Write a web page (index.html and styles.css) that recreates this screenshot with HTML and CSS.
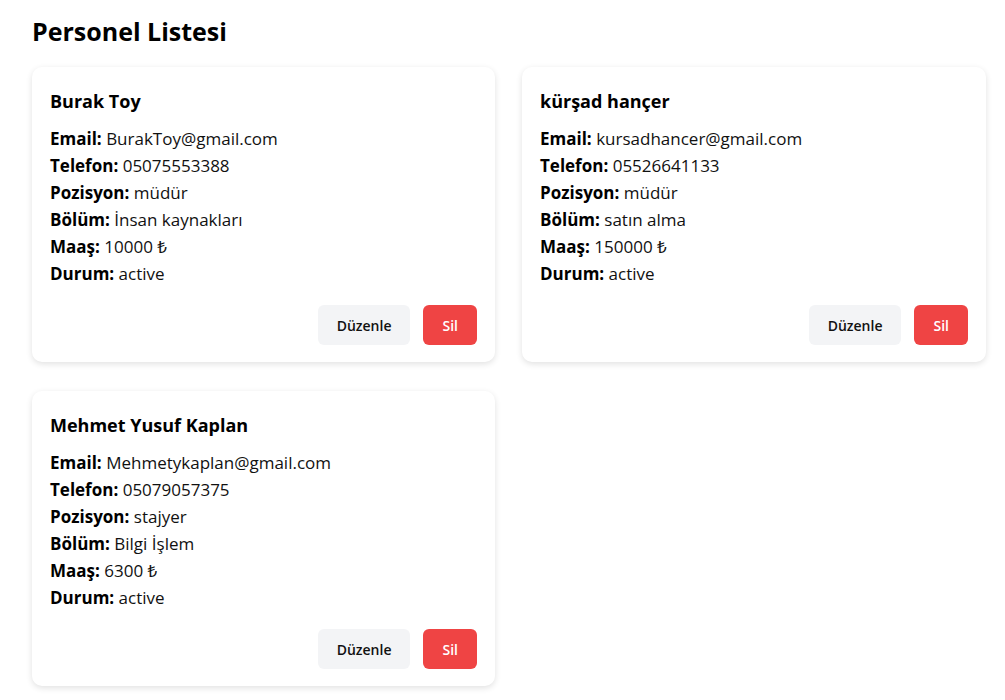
FILE: index.html
```html
<!DOCTYPE html>
<html lang="tr">
<head>
<meta charset="utf-8">
<title>Personel Listesi</title>
<link rel="stylesheet" href="styles.css">
</head>
<body>
<main class="page">
  <h1 class="title">Personel Listesi</h1>
  <div class="grid">
    <div class="card">
      <h2 class="name">Burak Toy</h2>
      <p class="row"><b>Email:</b> BurakToy@gmail.com</p>
      <p class="row"><b>Telefon:</b> 05075553388</p>
      <p class="row"><b>Pozisyon:</b> müdür</p>
      <p class="row"><b>Bölüm:</b> İnsan kaynakları</p>
      <p class="row"><b>Maaş:</b> 10000 ₺</p>
      <p class="row"><b>Durum:</b> active</p>
      <div class="actions">
        <button class="btn btn-edit">Düzenle</button>
        <button class="btn btn-del">Sil</button>
      </div>
    </div>
    <div class="card">
      <h2 class="name">kürşad hançer</h2>
      <p class="row"><b>Email:</b> kursadhancer@gmail.com</p>
      <p class="row"><b>Telefon:</b> 05526641133</p>
      <p class="row"><b>Pozisyon:</b> müdür</p>
      <p class="row"><b>Bölüm:</b> satın alma</p>
      <p class="row"><b>Maaş:</b> 150000 ₺</p>
      <p class="row"><b>Durum:</b> active</p>
      <div class="actions">
        <button class="btn btn-edit">Düzenle</button>
        <button class="btn btn-del">Sil</button>
      </div>
    </div>
    <div class="card">
      <h2 class="name">Mehmet Yusuf Kaplan</h2>
      <p class="row"><b>Email:</b> Mehmetykaplan@gmail.com</p>
      <p class="row"><b>Telefon:</b> 05079057375</p>
      <p class="row"><b>Pozisyon:</b> stajyer</p>
      <p class="row"><b>Bölüm:</b> Bilgi İşlem</p>
      <p class="row"><b>Maaş:</b> 6300 ₺</p>
      <p class="row"><b>Durum:</b> active</p>
      <div class="actions">
        <button class="btn btn-edit">Düzenle</button>
        <button class="btn btn-del">Sil</button>
      </div>
    </div>
  </div>
</main>
</body>
</html>
```
FILE: styles.css
```css
* { box-sizing: border-box; }
html, body { margin: 0; padding: 0; background: #ffffff; }
body {
  font-family: "Open Sans", "Noto Sans", "DejaVu Sans", sans-serif;
  color: #111111;
}
.page {
  padding: 13px 19px 20px 32px;
}
.title {
  margin: 0 0 18px 0;
  font-size: 25px;
  font-weight: 700;
  line-height: 36px;
  color: #000;
}
.grid {
  display: grid;
  grid-template-columns: 463px 464px;
  column-gap: 27px;
  row-gap: 29px;
}
.card {
  background: #fff;
  border-radius: 10px;
  box-shadow: 0 2px 6px rgba(0,0,0,0.12);
  padding: 20px 18px 17px 18px;
}
.name {
  margin: 0 0 10px 0;
  font-size: 18px;
  font-weight: 700;
  line-height: 28px;
  color: #000;
}
.row {
  margin: 0;
  font-size: 17px;
  line-height: 27px;
  color: #111;
}
.row b { font-weight: 700; color: #000; }
.actions {
  display: flex;
  justify-content: flex-end;
  gap: 13px;
  margin-top: 18px;
}
.btn {
  font-family: inherit;
  font-size: 14px;
  font-weight: 600;
  height: 40px;
  border: none;
  border-radius: 6px;
  padding: 0 19px;
  cursor: pointer;
}
.btn-edit { background: #f3f4f6; color: #111; }
.btn-del { background: #ef4444; color: #fff; }
```
